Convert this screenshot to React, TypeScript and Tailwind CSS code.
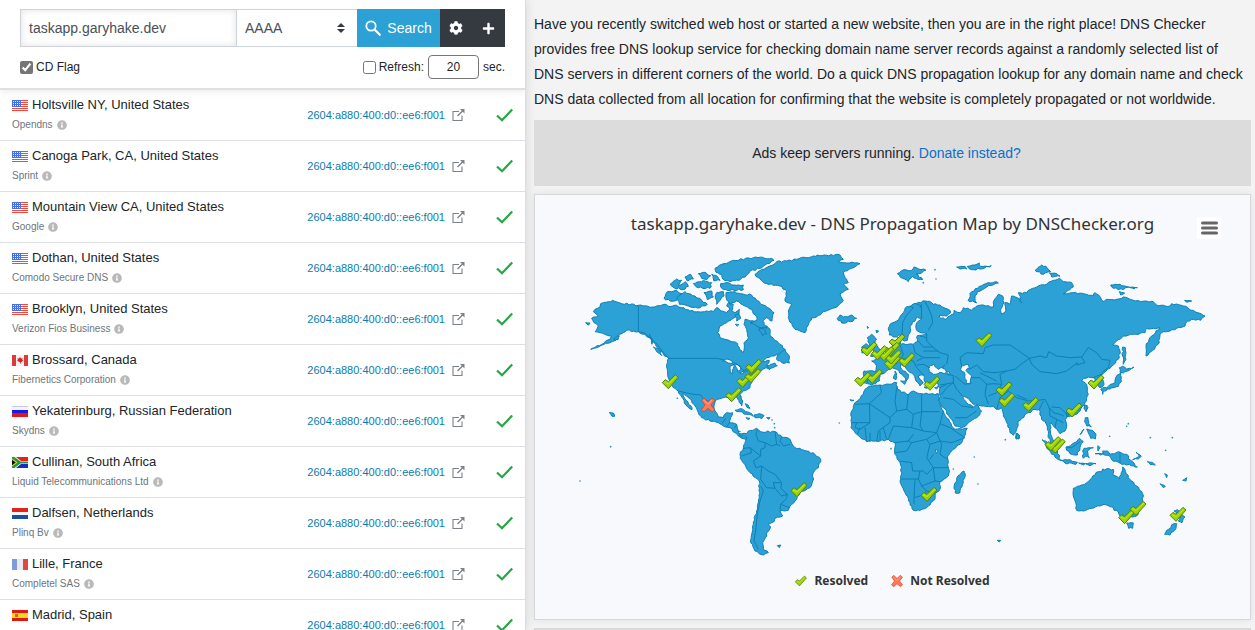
import React from "react";
import { FaCog, FaPlus, FaInfoCircle } from "react-icons/fa";

type FlagCode = "us" | "ca" | "ru" | "za" | "nl" | "fr" | "es";

const SERVERS: { flag: FlagCode; place: string; provider?: string }[] = [
  { flag: "us", place: "Holtsville NY, United States", provider: "Opendns" },
  { flag: "us", place: "Canoga Park, CA, United States", provider: "Sprint" },
  { flag: "us", place: "Mountain View CA, United States", provider: "Google" },
  { flag: "us", place: "Dothan, United States", provider: "Comodo Secure DNS" },
  { flag: "us", place: "Brooklyn, United States", provider: "Verizon Fios Business" },
  { flag: "ca", place: "Brossard, Canada", provider: "Fibernetics Corporation" },
  { flag: "ru", place: "Yekaterinburg, Russian Federation", provider: "Skydns" },
  { flag: "za", place: "Cullinan, South Africa", provider: "Liquid Telecommunications Ltd" },
  { flag: "nl", place: "Dalfsen, Netherlands", provider: "Plinq Bv" },
  { flag: "fr", place: "Lille, France", provider: "Completel SAS" },
  { flag: "es", place: "Madrid, Spain" },
];

const ADDRESS = "2604:a880:400:d0::ee6:f001";

function Flag({ code }: { code: FlagCode }) {
  return (
    <svg className="h-[11px] w-4 shrink-0" viewBox="0 0 16 11" aria-hidden="true" shapeRendering="crispEdges">
      {code === "us" && (
        <>
          <rect width="16" height="11" fill="#fff" />
          {[0, 2, 4, 6, 8, 10].map((y) => (
            <rect key={y} y={y} width="16" height="1" fill="#ee4a3f" />
          ))}
          <rect y="0" width="9" height="7" fill="#4470e6" />
          {[1, 3, 5].map((y) => (
            <g key={y} fill="#dfe6ff">
              <rect x="1" y={y} width="1" height="1" />
              <rect x="3" y={y} width="1" height="1" />
              <rect x="5" y={y} width="1" height="1" />
              <rect x="7" y={y} width="1" height="1" />
            </g>
          ))}
        </>
      )}
      {code === "ca" && (
        <>
          <rect width="16" height="11" fill="#f7f1f1" />
          <rect width="4" height="11" fill="#dc3a36" />
          <rect x="12" width="4" height="11" fill="#dc3a36" />
          <path d="M8 2l1 1.500 1.800-.3-.6 1.800 1 .6-2.400 1.800v1.400h-.7V7.400L5 5.600l1-.6-.7-1.800 1.700.3z" fill="#e02020" shapeRendering="auto" />
        </>
      )}
      {code === "ru" && (
        <>
          <rect width="16" height="11" fill="#f4f4fb" />
          <rect y="4" width="16" height="4" fill="#1a1ae0" />
          <rect y="7" width="16" height="4" fill="#e01818" />
          <rect width="16" height="1" fill="#c9c9ef" />
        </>
      )}
      {code === "za" && (
        <g shapeRendering="auto">
          <rect width="16" height="5" fill="#e8201c" />
          <rect y="6" width="16" height="5" fill="#1a2bc0" />
          <path d="M0 0h4l5 4h7v3H9l-5 4H0z" fill="#fff" />
          <path d="M0 0h2.500l6 4.500H16v2H8.500L2.500 11H0z" fill="#1f9a4a" />
          <path d="M0 1.500L5.500 5.500 0 9.500z" fill="#f4d52a" />
          <path d="M0 2.800L3.800 5.500 0 8.200z" fill="#111" />
        </g>
      )}
      {code === "nl" && (
        <>
          <rect width="16" height="11" fill="#f6f6f8" />
          <rect width="16" height="4" fill="#e3231c" />
          <rect y="7" width="16" height="4" fill="#1c4f9c" />
        </>
      )}
      {code === "fr" && (
        <>
          <rect width="16" height="11" fill="#e9eaee" />
          <rect width="5" height="11" fill="#7f9bdd" />
          <rect x="11" width="5" height="11" fill="#e0483e" />
        </>
      )}
      {code === "es" && (
        <>
          <rect width="16" height="11" fill="#e01a12" />
          <rect y="3" width="16" height="5" fill="#f9d423" />
          <rect x="3" y="4" width="3" height="3" fill="#d2691e" />
        </>
      )}
    </svg>
  );
}

function SearchIcon() {
  return (
    <svg className="size-4" viewBox="0 0 16 16" fill="none" stroke="#fff" aria-hidden="true">
      <circle cx="6" cy="6" r="4.700" strokeWidth="1.700" />
      <path d="M9.500 9.500L14.800 14.800" strokeWidth="2.200" strokeLinecap="round" />
    </svg>
  );
}

function ExternalIcon() {
  return (
    <svg className="h-[14px] w-[13px]" viewBox="0 0 13 14" fill="none" stroke="#7d8288" strokeWidth="1.100" aria-hidden="true">
      <path d="M7 3.500H1v9h9V7.500" />
      <path d="M5.500 8L11.500 2" strokeWidth="1.400" />
      <path d="M8 1h4.500v4.500z" fill="#7d8288" stroke="none" />
    </svg>
  );
}

function CheckIcon() {
  return (
    <svg className="ml-auto block h-[14px] w-[17px]" viewBox="0 0 17 14" fill="none" stroke="#28a745" strokeWidth="2.200" role="img">
      <path d="M1 7.500L6 12.300 16.200 1.500" />
    </svg>
  );
}

/* ---------- World map ---------- */

/* Turns a coarse outline into a ragged coastline by splitting its long edges. */
function coast(points: string): string {
  const n = points.trim().split(/[\s,]+/).map(Number);
  const pts: [number, number][] = [];
  for (let i = 0; i < n.length; i += 2) pts.push([n[i], n[i + 1]]);
  let seed = 7;
  const rand = () => {
    seed = (seed * 1103515245 + 12345) % 2147483648;
    return seed / 2147483648 - 0.5;
  };
  const out: string[] = [];
  pts.forEach(([x, y], i) => {
    const [x2, y2] = pts[(i + 1) % pts.length];
    const len = Math.hypot(x2 - x, y2 - y);
    const parts = Math.max(1, Math.min(8, Math.round(len / 7)));
    out.push(`${x} ${y}`);
    for (let k = 1; k < parts; k++) {
      const t = k / parts;
      const off = rand() * 5;
      out.push(
        `${(x + (x2 - x) * t - ((y2 - y) / len) * off).toFixed(1)} ${(y + (y2 - y) * t + ((x2 - x) / len) * off).toFixed(1)}`
      );
    }
  });
  return `M${out.join("L")}Z`;
}

type Region = { x: number; y: number; land: string[]; water?: string[]; borders?: string };

const REGIONS: Region[] = [
  {
    /* North America */
    x: 0,
    y: 0,
    land: [
      "75,205 90,198 92,188 108,184 128,178 150,186 205,193 240,199 262,194 282,190 300,197 320,193 335,200 360,210 385,212 410,210 430,212 440,200 455,210 470,215 480,205 470,195 478,182 490,190 485,210 495,215 508,205 505,225 485,235 470,245 450,255 443,275 450,290 480,300 503,308 508,325 518,335 523,320 522,305 535,290 530,265 522,250 525,235 540,240 570,242 575,262 590,255 600,265 600,285 625,305 645,325 640,340 605,345 590,350 578,362 598,358 590,372 604,380 580,384 560,395 555,410 545,425 540,440 520,450 510,460 518,480 515,495 508,485 500,468 480,470 460,470 440,475 433,490 435,510 445,528 460,530 470,515 488,515 482,530 478,545 500,550 505,570 520,590 535,588 528,598 510,588 495,575 480,560 460,555 445,545 420,540 395,530 385,515 375,495 365,480 350,465 338,457 348,478 366,500 366,506 348,492 335,468 325,450 310,440 300,420 293,400 290,370 296,352 280,340 268,325 252,305 238,290 225,280 205,272 170,268 160,275 145,280 140,295 120,305 90,315 62,325 95,310 120,295 125,285 105,280 90,275 75,272 85,255 72,245 65,232 85,225 70,212",
      "435,82 455,70 490,58 550,50 605,52 612,58 585,72 570,82 540,90 530,102 508,118 480,122 458,114 455,100 438,94",
      "452,128 475,125 492,132 520,132 520,146 480,148 455,142",
      "282,172 292,152 318,148 335,158 320,178 300,180",
      "322,168 345,152 375,165 395,178 412,190 390,200 355,195 328,190",
      "300,130 320,114 335,118 325,134 345,122 355,136 340,146 312,140",
      "345,108 362,100 370,114 352,120",
      "385,98 405,94 422,104 410,116 395,112",
      "370,128 400,118 425,125 420,142 385,140",
      "425,100 442,106 450,118 432,120",
      "402,155 425,150 430,168 412,176",
      "440,155 460,152 462,165 450,178 440,190 436,172",
      "468,155 495,152 512,158 545,162 560,178 580,192 612,215 606,240 590,230 578,240 590,262 560,255 540,245 562,235 545,205 525,195 500,180 480,190 468,170",
      "495,222 505,218 512,232 500,240",
      "566,264 580,262 590,278 578,284",
      "590,376 615,366 622,374 598,386",
      "625,340 645,325 658,345 658,366 635,365 620,355",
      "47,245 60,246 56,252",
      "132,292 148,284 144,296 134,300",
      "118,514 130,516 134,526 126,526",
      "238,280 248,300 246,310",
      "250,318 268,326 276,344 262,334",
      "526,488 534,492 540,502 530,498",
      "495,508 515,503 545,518 550,526 530,520 508,512",
      "552,522 568,518 582,524 575,533 555,530",
      "528,530 540,532 534,536",
      "590,530 600,530 596,535",
    ],
    water: [
      "458,360 470,354 486,360 488,368 474,366",
      "480,376 492,370 488,396 480,396",
      "494,368 510,374 512,386 502,392",
      "508,396 522,390 520,398",
      "524,386 538,382 534,390",
      "496,250 506,250 502,256",
    ],
    borders:
      "M205 193V272M205 272L225 276 240 292 262 310 280 335 296 352M296 352H440L462 357M490 365L500 368 512 380 524 392 545 382 556 366 575 362M325 450L345 455 372 460 392 462 402 475 414 480 428 498M455 548L468 532M478 545L470 558M500 552L492 562M505 570L512 572",
  },
  {
    /* Greenland, Eurasia and Africa */
    x: 630,
    y: 0,
    land: [
      "-75,100 -55,85 -30,75 -10,62 20,60 50,55 100,45 140,43 180,42 190,55 175,62 240,68 215,82 190,95 195,110 205,125 190,130 205,145 180,158 190,180 165,200 130,212 110,228 95,230 75,275 45,265 25,230 25,210 35,190 15,180 20,150 0,135 -40,128 -52,122",
      "172,232 180,222 190,228 215,222 230,232 212,242 185,246",
      "352,98 372,86 395,88 402,78 438,88 425,96 408,98 428,116 408,112 398,106 385,122 368,112",
      "530,78 555,76 560,84 540,84",
      "562,76 585,72 598,66 602,76 634,74 600,84 575,86",
      "650,122 612,130 592,142 575,152 564,178 590,186 585,172 592,152 620,138 655,126",
      "765,88 785,72 798,76 812,92 790,100",
      "808,96 830,98 840,106 815,108",
      "992,132 1020,130 1045,138 1030,146 1000,142",
      "1045,138 1072,140 1062,144",
      "1018,152 1034,156 1022,162",
      "1214,178 1235,180 1220,184",
      "325,262 330,250 350,240 365,220 375,202 395,192 410,187 435,180 455,185 460,190 480,192 505,205 512,215 500,225 480,222 478,228 495,235 510,225 520,220 522,208 540,215 550,200 575,208 590,195 610,192 640,198 642,178 655,160 668,165 672,185 662,205 665,220 678,210 675,185 690,190 695,165 712,170 726,186 715,155 740,155 745,148 775,135 800,130 820,118 838,112 850,122 875,125 880,138 865,148 850,158 880,155 920,160 940,165 945,155 962,170 972,182 980,175 1010,175 1030,168 1060,178 1095,180 1120,182 1130,192 1170,195 1175,188 1210,195 1245,212 1275,225 1262,238 1240,235 1222,240 1215,255 1190,262 1170,270 1150,272 1140,280 1138,305 1118,328 1098,345 1098,315 1110,290 1140,260 1120,262 1100,262 1095,275 1060,280 1030,285 1010,300 998,312 1015,315 1020,330 1015,355 995,375 972,395 962,408 972,430 960,440 950,425 940,410 925,408 910,412 905,420 920,430 925,460 915,485 900,510 880,525 862,525 855,535 860,555 855,570 840,578 825,560 810,545 812,580 822,600 830,620 815,610 805,590 802,565 795,540 785,535 778,505 765,505 745,515 715,540 710,565 700,583 690,575 680,545 670,520 665,500 650,505 640,495 610,495 580,490 560,470 548,468 565,490 580,498 592,492 605,510 590,530 545,560 525,555 515,535 490,500 475,480 480,460 480,440 470,425 440,430 432,415 432,403 415,405 430,425 420,435 408,420 400,400 380,385 362,370 365,385 385,400 385,410 378,420 370,405 350,385 335,380 320,390 300,400 298,420 275,432 262,428 250,425 252,390 285,392 290,375 275,360 300,350 320,340 335,320 350,310 352,290 362,290 362,310 400,310 412,302 412,284 440,278 412,270 408,252 425,232 412,228 390,255 390,275 382,298 372,300 362,282 345,288 328,282",
      "262,290 275,280 290,295 285,305 300,325 300,342 272,346 282,330 268,308",
      "245,318 258,308 268,318 262,335 246,336",
      "345,390 350,398 348,416 340,412",
      "362,420 378,420 374,430",
      "432,438 450,438 438,442",
      "464,440 476,436 470,444",
      "1028,318 1036,320 1038,355 1030,370 1028,345",
      "1018,380 1028,376 1040,384 1062,378 1048,388 1030,396 1020,394",
      "1022,396 1024,422 1015,436 990,444 970,450 968,460 962,445 985,436 1005,425 1012,402",
      "918,494 924,500 918,510",
      "708,576 718,582 718,592 708,594",
      "858,516 868,516 862,528",
      "272,435 300,432 350,425 352,445 385,462 400,450 425,458 478,460 475,478 490,510 515,555 525,565 562,562 545,605 515,630 503,645 503,670 508,690 505,705 480,722 480,745 468,755 465,775 440,800 420,808 400,808 390,785 375,755 360,720 365,695 360,665 345,640 345,605 325,595 300,600 260,602 230,580 213,560 213,515 225,485 250,460 255,445",
      "552,690 556,700 550,725 540,755 526,756 522,742 530,712",
      "210,476 222,478 214,480",
      "262,256 266,260 262,262",
      "288,268 296,270 290,276",
    ],
    water: [
      "448,392 445,378 462,370 475,385 495,372 488,382 512,398 480,394 460,400",
      "545,375 565,370 568,382 558,388 575,405 572,428 558,425 555,400 542,385",
      "466,626 474,628 470,638",
    ],
    borders:
      "M388 195L400 200 378 225 368 245 366 280M408 188L424 195 425 232M435 182L445 200 455 225 458 245 445 268M425 190L420 200M440 278L440 300 460 320 480 335 505 342 500 370M415 300L430 318 460 318M400 312L405 335 430 350 410 360M360 312L370 340 365 352 400 360 410 380 430 402M330 335L350 355 350 368 330 372M285 392L310 398M262 394L262 425M420 285L440 290M430 350L480 350M430 330L475 330M410 372L430 370 450 380M500 400L520 404 520 425 480 432M540 350L560 335 610 338 615 320 640 312 690 312 710 325 748 352M540 350L545 375M568 385L590 372 610 392 645 395 680 390 705 385 720 372 748 352M748 352L780 345 800 350 806 332 830 345 870 350 905 348 915 365 890 372 892 365 860 390 830 398 780 392 755 370 748 352M905 348L925 320 950 335 965 355 990 358 985 380 965 395M575 410L600 410 620 430 640 428 665 430 660 400 680 390M600 395L620 405 650 420M520 425L530 445 548 465M525 405L555 430 575 425M485 460L500 440 520 425M480 440L500 430M490 470L520 475 545 495M525 530L560 530 590 510M545 495L580 500M620 430L615 460 625 490M625 465L650 455 665 430M650 505L660 470 685 450 680 430M685 450L710 470 745 480 775 478 795 475 808 500M710 462L740 475M735 490L750 510M778 505L790 480M808 500L820 515 840 520 852 525M808 500L810 525 830 535 850 545M830 535L825 560M865 524L840 500 815 498M940 410L968 398M300 432L305 455 268 488 225 490M268 488L270 545 215 545M268 488L330 530 350 510 345 480 350 440M290 600L295 570 330 545 330 530M350 510L380 505 400 520 395 560 340 555M385 462L380 505M425 460V512H478M400 520L425 512M425 512L420 555 430 570 395 560M430 570L470 575 480 548 490 510M480 548L510 560 555 590 515 605 480 600 470 575M345 605L385 600 400 580M385 600L395 605 440 595 470 575M360 660L395 665 398 690 430 690 440 700 460 680 440 650 450 610 440 595M345 635L380 630 395 605M450 610L480 600 485 610 480 640 503 655M460 640L450 655M361 714H415L420 690M415 714L425 735 440 750 465 755M440 750L420 765 402 770 402 790M402 770L405 714M425 735L465 720 460 680 505 680M465 720L480 722M270 575V602M255 560L260 602M240 560L232 580M300 570L300 600M310 560L320 595M340 555L325 595M230 545L225 560 240 565 270 545",
  },
  {
    /* South America */
    x: 390,
    y: 480,
    land: [
      "118,98 140,98 145,90 170,82 182,92 225,92 245,108 270,115 285,140 320,150 345,160 362,175 355,200 340,215 338,240 330,260 300,275 290,295 270,315 265,328 240,330 248,345 225,352 222,362 205,370 212,378 200,395 200,405 188,425 190,445 205,455 190,462 165,450 152,425 155,400 160,370 170,330 178,290 178,240 150,215 125,178 120,160 130,140 140,108 122,106",
      "232,434 242,432 238,440",
    ],
    borders:
      "M172 85L168 100 175 120 195 125 195 140 182 145 182 165 160 180 168 200 185 195 205 210 225 220 245 245 242 262 262 280 260 292 242 310 240 328M125 165L155 155 150 140 130 142M150 140L182 165M185 195L182 235 200 260 225 262 220 245 242 245M182 255L190 270 180 300 172 340 168 380 162 420 175 445M195 125L215 135 230 130 225 92M245 108L240 120 250 135 270 130M230 130L240 135M225 262L245 285 262 280M242 310L268 320",
  },
  {
    /* South-east Asia and Oceania */
    x: 1200,
    y: 480,
    land: [
      "310,262 335,252 355,242 368,225 385,212 395,212 398,204 430,205 428,220 448,234 454,215 458,198 465,205 475,230 500,255 518,278 518,300 500,345 475,348 450,345 445,332 432,328 428,318 402,310 365,322 340,330 320,328 318,308 310,285",
      "470,366 490,366 488,382 476,382",
      "612,330 622,326 632,338 645,348 636,365 625,360 630,348",
      "620,368 618,382 600,402 584,400 590,388 612,368",
      "216,116 232,124 262,150 272,178 255,168 238,148",
      "270,178 300,176 322,184 318,190 285,186",
      "326,186 345,188 340,192",
      "346,188 365,186 378,188 360,194",
      "288,138 302,134 328,112 340,122 330,140 322,162 300,158 290,148",
      "342,142 370,140 352,150 358,170 346,166 340,172 338,150",
      "384,134 390,140 384,150",
      "375,158 400,158 392,162",
      "398,150 412,150 420,160 445,152 470,160 482,178 502,198 478,190 455,190 425,176 418,164 400,160",
      "498,154 514,166 505,174 488,176 508,166",
      "532,182 545,184 556,192 540,190",
      "584,218 592,222 590,230",
      "570,248 586,256 580,260",
      "638,238 650,230 648,240",
      "346,50 354,50 356,68 364,78 350,75 344,62",
      "330,100 342,84 334,98",
      "350,84 366,88 378,100 376,114 362,112 356,98",
      "344,12 352,14 348,32 342,22",
      "142,96 148,104 146,114 138,110",
      "82,418 92,418 88,423",
    ],
    borders: "M450 153V188M290 140L305 140 330 122",
  },
];

/* Tiny islands, drawn as dots. */
const ISLETS: [number, number][] = [
  [30, 720], [808, 546], [1306, 596], [1213, 648], [1224, 729], [1675, 548], [1670, 556], [1619, 586],
  [1741, 590], [1807, 590], [1787, 628], [613, 548], [614, 560], [606, 537], [122, 617], [322, 472],
  [1150, 684], [1098, 114], [1060, 125], [1095, 86], [963, 623],
];

const RESOLVED: [number, number][] = [
  [301, 422], [551, 376], [524, 418], [549, 404], [491, 461],
  [981, 300], [965, 325], [967, 365], [970, 348], [897, 324], [948, 338], [928, 335], [1010, 357],
  [1242, 296], [913, 406], [878, 415], [1086, 427],
  [1302, 444], [1310, 477], [1382, 490], [1578, 423], [1512, 507],
  [687, 746], [1077, 760],
  [1462, 615], [1449, 608], [1670, 827], [1704, 802], [1824, 820],
];

function ResolvedMark({ x, y }: { x: number; y: number }) {
  return (
    <g transform={`translate(${x} ${y})`} strokeLinejoin="round">
      <path d="M-24 3L-15 -6 -6 0 15 -21 24 -13 -6 21Z" fill="#9bd400" stroke="#55820c" strokeWidth="3" />
      <path d="M-18 1L-6 7 18 -16" fill="none" stroke="#c4ec4e" strokeWidth="2.500" />
    </g>
  );
}

function UnresolvedMark({ x, y }: { x: number; y: number }) {
  return (
    <g transform={`translate(${x} ${y})`} strokeLinejoin="round">
      <path
        d="M-19 -14L-12 -21 0 -9 12 -21 20 -14 9 0 20 14 13 21 0 10 -12 21 -20 14 -9 0Z"
        fill="#ff7857"
        stroke="#d2452c"
        strokeWidth="2.500"
      />
      <path d="M-12 -14L0 -2 12 -15" fill="none" stroke="#ffb39c" strokeWidth="2.500" />
    </g>
  );
}

function WorldMap() {
  return (
    <svg className="block w-full" viewBox="0 0 1950 960" role="img">
      {REGIONS.map((r, i) => (
        <g key={i} transform={`translate(${r.x} ${r.y})`} stroke="#0d80b5" strokeWidth="3" strokeLinejoin="round">
          {r.land.map((p, k) => (
            <path key={k} d={coast(p)} fill="#2ba1d5" />
          ))}
          {r.water?.map((p, k) => (
            <path key={k} d={coast(p)} fill="#f8f9fc" />
          ))}
          {r.borders && <path d={r.borders} fill="none" />}
        </g>
      ))}
      {ISLETS.map(([x, y], i) => (
        <circle key={i} cx={x} cy={y} r="2.500" fill="#2b8fbf" />
      ))}
      {RESOLVED.map(([x, y], i) => (
        <ResolvedMark key={i} x={x} y={y} />
      ))}
      <UnresolvedMark x={414} y={492} />
    </svg>
  );
}

function Results() {
  return (
    <table className="w-full table-fixed border-separate border-spacing-0">
      <tbody>
        {SERVERS.map((s) => (
          <tr key={s.place} className="h-[51px]">
            <td className="border-b border-[#dcdfe3] pl-3 align-top">
              <div className="mt-[5px] flex items-center gap-1 text-[13px] leading-5 whitespace-nowrap text-[#212529]">
                <Flag code={s.flag} />
                {s.place}
              </div>
              {s.provider && (
                <div className="mt-[2px] flex items-center gap-1 text-[10px] leading-4 whitespace-nowrap text-[#6c757d]">
                  {s.provider}
                  <FaInfoCircle className="size-[10px] text-[#b9b9b9]" />
                </div>
              )}
            </td>
            <td className="w-[160px] border-b border-[#dcdfe3]">
              <div className="flex items-center justify-end gap-[7px]">
                <a href="#address" className="text-[11px] leading-4 text-[#0a7cae]">
                  {ADDRESS}
                </a>
                <ExternalIcon />
              </div>
            </td>
            <td className="w-[60px] border-b border-[#dcdfe3] pr-3">
              <CheckIcon />
            </td>
          </tr>
        ))}
      </tbody>
    </table>
  );
}

function LookupForm() {
  return (
    <form
      className="border-b-2 border-[#dfe0e2] px-5 pt-[9px] pb-[9px] shadow-[0_3px_6px_rgba(0,0,0,0.06)]"
      onSubmit={(e) => e.preventDefault()}
    >
      <div className="flex h-[38px]">
        <input
          aria-label="Domain"
          defaultValue="taskapp.garyhake.dev"
          className="min-w-0 flex-1 border border-[#ced4da] px-2 text-[14px] text-[#495057] shadow-[inset_0_0_7px_rgba(0,0,0,0.12)] outline-none"
        />
        <div className="relative w-[120px]">
          <select
            aria-label="Record type"
            className="size-full appearance-none border-y border-[#ced4da] bg-white px-2 text-[14px] text-[#495057] outline-none"
          >
            <option>AAAA</option>
          </select>
          <svg className="pointer-events-none absolute top-[14px] right-3 h-[10px] w-2" viewBox="0 0 8 10" fill="#343a40" aria-hidden="true">
            <path d="M4 0l4 4H0zM4 10l4-4H0z" />
          </svg>
        </div>
        <button type="submit" className="flex w-[83px] items-center justify-center gap-[6px] bg-[#2ba1d5] text-[14px] text-white">
          <SearchIcon />
          Search
        </button>
        <button type="button" aria-label="Settings" className="flex w-8 items-center justify-center bg-[#343a40] text-white">
          <FaCog className="size-[14px]" />
        </button>
        <button type="button" aria-label="Add" className="flex w-[33px] items-center justify-center bg-[#343a40] text-white">
          <FaPlus className="size-[13px]" />
        </button>
      </div>
      <div className="mt-2 flex h-6 items-center justify-between text-[12px] text-[#212529]">
        <label className="flex items-center gap-[3px]">
          <input type="checkbox" defaultChecked className="size-[13px] accent-[#767676]" />
          CD Flag
        </label>
        <div className="flex items-center gap-1">
          <label className="flex items-center gap-[3px]">
            <input type="checkbox" className="size-[13px]" />
            Refresh:
          </label>
          <input
            aria-label="Refresh interval"
            defaultValue="20"
            className="h-6 w-[51px] rounded-sm border border-[#767676] bg-white text-center text-[12px] text-[#212529]"
          />
          sec.
        </div>
      </div>
    </form>
  );
}

function MapCard() {
  return (
    <section className="mt-2 border border-[#d5d7d9] bg-[#f8f9fc] pb-[26px] shadow-[0_0_8px_rgba(0,0,0,0.08)]">
      <header className="relative flex h-[46px] items-center justify-center pt-3">
        <h2 className="font-['Noto_Sans',sans-serif] text-[17px] leading-6 text-[#333333]">
          taskapp.garyhake.dev - DNS Propagation Map by DNSChecker.org
        </h2>
        <button type="button" aria-label="Map menu" className="absolute top-[22px] right-[29px] flex h-[22px] w-6 items-center justify-center bg-white">
          <svg className="h-[14px] w-[17px]" viewBox="0 0 17 14" stroke="#666" strokeWidth="3" strokeLinecap="round" aria-hidden="true">
            <path d="M1.500 2h14M1.500 7h14M1.500 12h14" />
          </svg>
        </button>
      </header>
      <div className="pr-[30px] pl-[35px]">
        <WorldMap />
      </div>
      <div className="mt-2 flex items-center justify-center gap-[23px] font-['Noto_Sans',sans-serif] text-[12px] leading-6 font-bold text-[#333333]">
        <span className="flex items-center gap-[7px]">
          <svg className="size-3" viewBox="-25 -23 51 46" aria-hidden="true">
            <ResolvedMark x={0} y={0} />
          </svg>
          Resolved
        </span>
        <span className="flex items-center gap-[7px]">
          <svg className="size-3" viewBox="-22 -22 44 44" aria-hidden="true">
            <UnresolvedMark x={0} y={0} />
          </svg>
          Not Resolved
        </span>
      </div>
    </section>
  );
}

export default function App() {
  return (
    <div className="grid h-screen grid-cols-[minmax(0,526fr)_minmax(0,729fr)] overflow-hidden bg-[#f3f3f3] font-['Liberation_Sans',Arial,sans-serif]">
      <aside className="overflow-hidden border-r border-[#d9dce0] bg-white shadow-[0_0_10px_rgba(0,0,0,0.12)]">
        <LookupForm />
        <Results />
      </aside>
      <main className="overflow-hidden pr-1 pl-2">
        <p className="pt-3 pb-2 text-[14px] leading-[25px] text-[#212529]">
          Have you recently switched web host or started a new website, then you are in the right place! DNS Checker
          <br />
          provides free DNS lookup service for checking domain name server records against a randomly selected list of
          <br />
          DNS servers in different corners of the world. Do a quick DNS propagation lookup for any domain name and check
          <br />
          DNS data collected from all location for confirming that the website is completely propagated or not worldwide.
        </p>
        <div className="bg-[#dcdcdc] py-5 pr-3 text-center text-[14px] leading-[26px] text-[#212529]">
          Ads keep servers running.{" "}
          <a href="#donate" className="text-[#0b6fc9]">
            Donate instead?
          </a>
        </div>
        <MapCard />
        <div className="mt-2 h-10 border border-[#d5d7d9] bg-[#dcdcdc]" />
      </main>
    </div>
  );
}
